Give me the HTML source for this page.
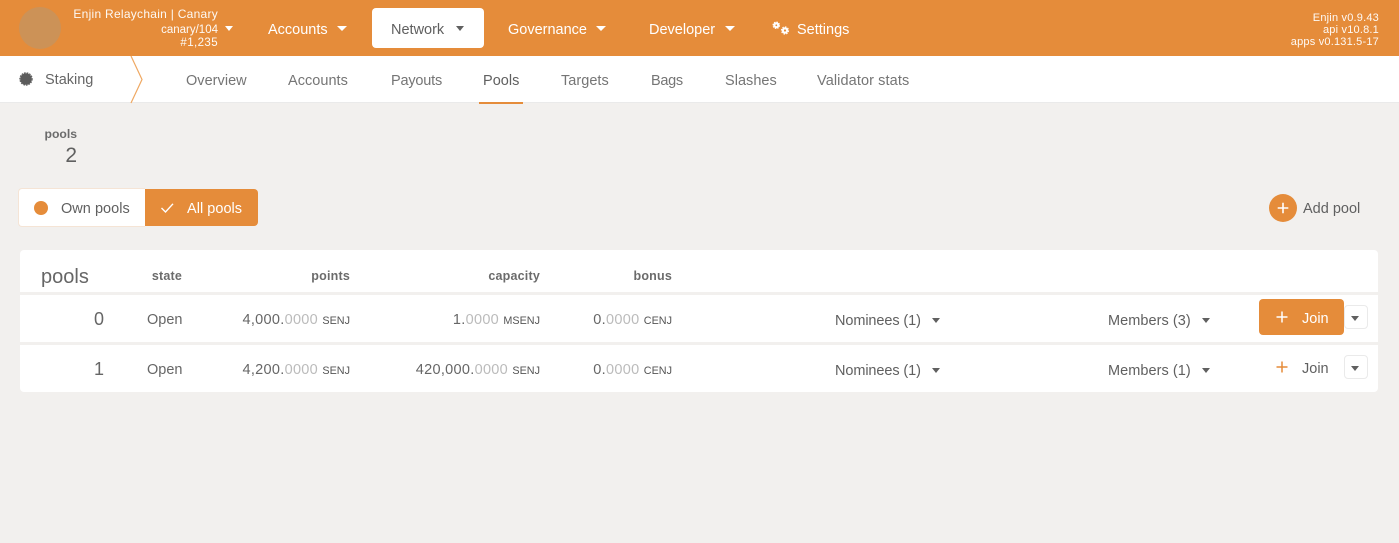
<!DOCTYPE html>
<html><head><meta charset="utf-8">
<style>
html,body{margin:0;padding:0;width:1399px;height:543px;overflow:hidden;background:#f2f0ee;font-family:"Liberation Sans",sans-serif;color:#606060}
.a{position:absolute;white-space:nowrap;line-height:16px}
.box{position:absolute;background:#fff}
.w{color:#fff}
.n{font-size:14.5px;letter-spacing:0}
.s{font-size:14.5px;letter-spacing:.03px;color:#757575}
.r{text-align:right}
.h{font-size:12.5px;font-weight:bold;color:#6b6b6b;letter-spacing:.2px}
.v{font-size:14.5px;letter-spacing:.3px;color:#666}
.v i{font-style:normal;color:#bbb;font-weight:normal}
.v b{font-weight:normal;font-size:10.8px;letter-spacing:0;color:#555}
.t{position:absolute;width:0;height:0;border-left:5px solid transparent;border-right:5px solid transparent;border-top:5.5px solid #fff}
.t.d{border-top-color:#606060;border-left-width:4.5px;border-right-width:4.5px;border-top-width:5px}
svg{position:absolute;overflow:visible}
</style></head><body>
<div class="box" style="left:0;top:0;width:1399px;height:56px;background:#e58c3a"></div>
<div style="position:absolute;left:19px;top:7px;width:42px;height:42px;border-radius:50%;background:#cc9257"></div>
<div class="a w r" style="right:1181px;top:6px;font-size:12px;letter-spacing:.27px;opacity:.95">Enjin Relaychain | Canary</div>
<div class="a w r" style="right:1181px;top:22px;font-size:11.5px;letter-spacing:0;opacity:.95">canary/104</div>
<div class="a w r" style="right:1181px;top:35px;font-size:11.5px;letter-spacing:.4px;opacity:.95">#1,235</div>
<div class="t" style="left:225px;top:26px;border-top-width:5px;border-left-width:4.5px;border-right-width:4.5px"></div>
<div class="a w n" style="left:268px;top:22px">Accounts</div>
<div class="t" style="left:337px;top:26px"></div>
<div class="box" style="left:372px;top:8px;width:112px;height:40px;border-radius:4px"></div>
<div class="a n" style="left:391px;top:22px;color:#5f5f5f">Network</div>
<div class="t d" style="left:456px;top:26px"></div>
<div class="a w n" style="left:508px;top:22px">Governance</div>
<div class="t" style="left:596px;top:26px"></div>
<div class="a w n" style="left:649px;top:22px">Developer</div>
<div class="t" style="left:725px;top:26px"></div>
<svg style="left:772px;top:21px" width="19" height="15" viewBox="0 0 19 15" fill="#fff">
<circle cx="4.3" cy="4.3" r="3"/><circle cx="4.3" cy="4.3" r="3.3" fill="none" stroke="#fff" stroke-width="1" stroke-dasharray="1.5 1.1"/><circle cx="4.3" cy="4.300" r=".9" fill="#e58c3a"/>
<circle cx="13" cy="9.500" r="3.200"/><circle cx="13" cy="9.500" r="3.600" fill="none" stroke="#fff" stroke-width="1" stroke-dasharray="1.600 1.200"/><circle cx="13" cy="9.500" r="1.100" fill="#e58c3a"/>
</svg>
<div class="a w n" style="left:797px;top:22px">Settings</div>
<div class="a w r" style="right:20px;top:12px;font-size:11px;letter-spacing:.2px;line-height:12px;opacity:.95">Enjin v0.9.43<br>api v10.8.1<br>apps v0.131.5-17</div>

<div class="box" style="left:0;top:56px;width:1399px;height:46px"></div>
<div class="box" style="left:0;top:102px;width:1399px;height:1px;background:#eaeaea"></div>
<svg style="left:18px;top:71px" width="16" height="16" viewBox="0 0 16 16"><circle cx="8" cy="8" r="5.800" fill="#5c5c5c"/><circle cx="8" cy="8" r="6.200" fill="none" stroke="#5c5c5c" stroke-width="1" stroke-dasharray="1.700 1"/></svg>
<div class="a" style="left:45px;top:72px;font-size:14.5px;letter-spacing:0;color:#666">Staking</div>
<svg style="left:130px;top:56px" width="14" height="47" viewBox="0 0 14 47"><path d="M1 0L12 23.500L1 47" fill="none" stroke="#efa862" stroke-width="1.200"/></svg>
<div class="a s" style="left:186px;top:73px">Overview</div>
<div class="a s" style="left:288px;top:73px">Accounts</div>
<div class="a s" style="left:391px;top:73px;letter-spacing:-.2px">Payouts</div>
<div class="a s" style="left:483px;top:73px;color:#606060">Pools</div>
<div class="a s" style="left:561px;top:73px">Targets</div>
<div class="a s" style="left:651px;top:73px;letter-spacing:-.3px">Bags</div>
<div class="a s" style="left:725px;top:73px">Slashes</div>
<div class="a s" style="left:817px;top:73px;letter-spacing:.1px">Validator stats</div>
<div class="box" style="left:479px;top:102px;width:44px;height:2px;background:#e58c3a"></div>

<div class="a h r" style="right:1322px;top:126px;letter-spacing:0;font-size:12.2px">pools</div>
<div class="a r" style="right:1322px;top:146px;font-size:21px;line-height:20px;color:#606060">2</div>

<div class="box" style="left:18px;top:188px;width:127px;height:39px;border:1px solid #f5e4d5;border-right:0;border-radius:4px 0 0 4px;box-sizing:border-box"></div>
<div style="position:absolute;left:34px;top:201px;width:14px;height:14px;border-radius:50%;background:#e58c3a"></div>
<div class="a" style="left:61px;top:201px;font-size:14.5px;letter-spacing:.03px">Own pools</div>
<div class="box" style="left:145px;top:189px;width:113px;height:37px;background:#e58c3a;border-radius:0 4px 4px 0"></div>
<svg style="left:160px;top:202px" width="15" height="12" viewBox="0 0 15 12"><path d="M1.500 6L5.500 10L13 1.800" fill="none" stroke="#fff" stroke-width="1.400"/></svg>
<div class="a w" style="left:187px;top:201px;font-size:14.5px;letter-spacing:.03px">All pools</div>

<div style="position:absolute;left:1269px;top:194px;width:28px;height:28px;border-radius:50%;background:#e58c3a"></div>
<svg style="left:1276px;top:201px" width="14" height="14"><path d="M7 1.700V12.300M1.700 7H12.300" stroke="#fff" stroke-width="1.600"/></svg>
<div class="a" style="left:1303px;top:201px;font-size:14.5px;letter-spacing:0">Add pool</div>

<div class="box" style="left:20px;top:250px;width:1358px;height:42px;border-radius:4px 4px 0 0"></div>
<div class="box" style="left:20px;top:295px;width:1358px;height:47px"></div>
<div class="box" style="left:20px;top:345px;width:1358px;height:47px;border-radius:0 0 4px 4px"></div>

<div class="a" style="left:41px;top:266px;font-size:20px;line-height:22px;color:#666">pools</div>
<div class="a h r" style="right:1217px;top:268px">state</div>
<div class="a h r" style="right:1049px;top:268px">points</div>
<div class="a h r" style="right:859px;top:268px">capacity</div>
<div class="a h r" style="right:727px;top:268px">bonus</div>

<div class="a r" style="right:1295px;top:310px;font-size:18px;line-height:18px;color:#666">0</div>
<div class="a" style="left:147px;top:312px;font-size:14.5px;letter-spacing:0;color:#666">Open</div>
<div class="a v r" style="right:1049px;top:312px">4,000.<i>0000</i> <b>SENJ</b></div>
<div class="a v r" style="right:859px;top:312px">1.<i>0000</i> <b>MSENJ</b></div>
<div class="a v r" style="right:727px;top:312px">0.<i>0000</i> <b>CENJ</b></div>
<div class="a n" style="left:835px;top:313px;letter-spacing:-.1px">Nominees (1)</div>
<div class="t d" style="left:932px;top:318px"></div>
<div class="a n" style="left:1108px;top:313px;letter-spacing:.05px">Members (3)</div>
<div class="t d" style="left:1202px;top:318px"></div>
<div class="box" style="left:1259px;top:299px;width:85px;height:36px;background:#e58c3a;border-radius:4px"></div>
<svg style="left:1276px;top:311px" width="12" height="12"><path d="M6 .5V11.500M.5 6H11.500" stroke="#fff" stroke-width="1.500"/></svg>
<div class="a w" style="left:1302px;top:311px;font-size:14.5px;letter-spacing:0">Join</div>
<div class="box" style="left:1344px;top:305px;width:24px;height:24px;box-sizing:border-box;border:1px solid #eaeaea;border-radius:4px"></div>
<div class="t d" style="left:1351px;top:316px"></div>

<div class="a r" style="right:1295px;top:360px;font-size:18px;line-height:18px;color:#666">1</div>
<div class="a" style="left:147px;top:362px;font-size:14.5px;letter-spacing:0;color:#666">Open</div>
<div class="a v r" style="right:1049px;top:362px">4,200.<i>0000</i> <b>SENJ</b></div>
<div class="a v r" style="right:859px;top:362px">420,000.<i>0000</i> <b>SENJ</b></div>
<div class="a v r" style="right:727px;top:362px">0.<i>0000</i> <b>CENJ</b></div>
<div class="a n" style="left:835px;top:363px;letter-spacing:-.1px">Nominees (1)</div>
<div class="t d" style="left:932px;top:368px"></div>
<div class="a n" style="left:1108px;top:363px;letter-spacing:.05px">Members (1)</div>
<div class="t d" style="left:1202px;top:368px"></div>
<svg style="left:1276px;top:361px" width="12" height="12"><path d="M6 .5V11.500M.5 6H11.500" stroke="#e58c3a" stroke-width="1.500"/></svg>
<div class="a" style="left:1302px;top:361px;font-size:14.5px;letter-spacing:0">Join</div>
<div class="box" style="left:1344px;top:355px;width:24px;height:24px;box-sizing:border-box;border:1px solid #eaeaea;border-radius:4px"></div>
<div class="t d" style="left:1351px;top:366px"></div>
</body></html>
